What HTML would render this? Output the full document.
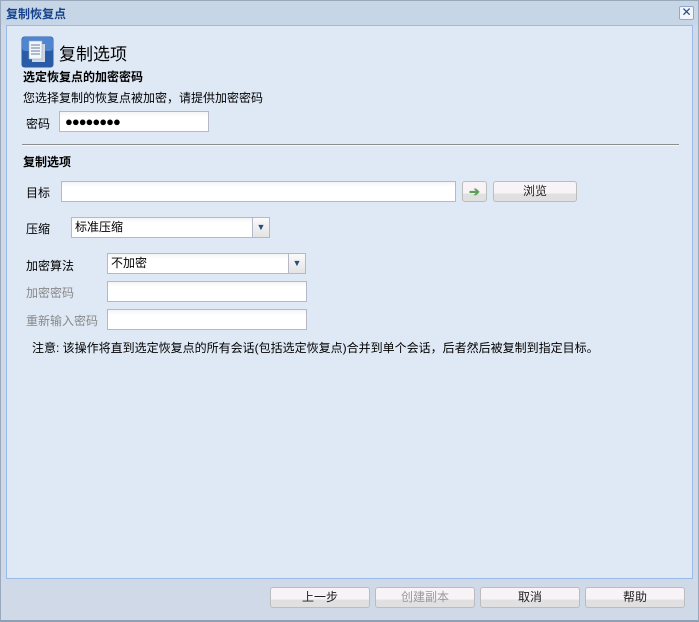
<!DOCTYPE html>
<html><head><meta charset="utf-8"><style>
*{margin:0;padding:0;box-sizing:border-box}
body{width:699px;height:622px;overflow:hidden;background:#cfd9e8;font-family:"Liberation Sans","Noto Sans CJK SC",sans-serif;font-size:12px;color:#000;position:relative}
.a{position:absolute}
#win{left:0;top:0;width:699px;height:622px;border:1px solid #99a8bb;border-bottom:2px solid #8fa0b5;background:#cfd9e8}
#title{left:1px;top:1px;width:697px;height:24px;background:#c6d6e6;color:#15428b;font-weight:bold;font-size:12px;padding:4px 0 0 5px}
#close{left:679px;top:6px;width:15px;height:14px;border:1px solid #8fa9cd;border-radius:2px;background:#f2f6fb;color:#25457a;font-size:12px;line-height:11px;text-align:center}
#panel{left:6px;top:25px;width:687px;height:554px;background:#dfe9f5;border:1px solid #99bbe8}
.in{background:linear-gradient(#f4f4f4,#fff 5px);border:1px solid #b5b8c8;height:21px}
.lbl{font-size:12px}
.grey{color:#888}
.btn{height:21px;border:1px solid #bcbcbc;border-radius:3px;background:linear-gradient(#f7f3f6 0,#f7f3f6 60%,#e0e0e0 60%);text-align:center;line-height:19px;font-size:12px;color:#222}
.dd{width:18px;height:21px;border:1px solid #b5b8c8;background:linear-gradient(#fafafa,#e4e4e4);color:#2b4a80;font-size:9px;text-align:center;line-height:19px}
</style></head><body>
<div id="win" class="a"></div>
<div id="title" class="a">复制恢复点</div>
<div id="close" class="a">✕</div>
<div id="panel" class="a"></div>
<svg class="a" style="left:21px;top:36px" width="33" height="32" viewBox="0 0 33 32"><rect x="0.5" y="0.5" width="32" height="31" rx="3" fill="#2a5ba6"/><rect x="1" y="1" width="31" height="14" rx="3" fill="#4f86cf"/><rect x="11" y="8" width="13" height="18" fill="#cfd7e2"/><rect x="8" y="5" width="13" height="18" fill="#f3f6fa" stroke="#9aa9bf" stroke-width=".6"/><g stroke="#6a7f9d" stroke-width="1"><line x1="10" y1="9" x2="19" y2="9"/><line x1="10" y1="12" x2="19" y2="12"/><line x1="10" y1="15" x2="19" y2="15"/><line x1="10" y1="18" x2="19" y2="18"/></g></svg>
<div class="a" style="left:59px;top:40px;font-size:17px">复制选项</div>
<div class="a" style="left:23px;top:68px;font-weight:bold">选定恢复点的加密密码</div>
<div class="a" style="left:23px;top:89px">您选择复制的恢复点被加密，请提供加密密码</div>
<div class="a" style="left:26px;top:115px">密码</div>
<div class="a in" style="left:59px;top:111px;width:150px;padding-left:5px;font-size:13px;line-height:19px;letter-spacing:-1px">●●●●●●●●</div>
<div class="a" style="left:22px;top:144px;width:657px;height:2px;border-top:1px solid #8e8e8e;border-bottom:1px solid #f5f8fb"></div>
<div class="a" style="left:23px;top:153px;font-weight:bold">复制选项</div>
<div class="a" style="left:26px;top:184px">目标</div>
<div class="a in" style="left:61px;top:181px;width:395px"></div>
<div class="a btn" style="left:462px;top:181px;width:25px;color:#5aa05a;font-weight:bold;font-size:13px">➔</div>
<div class="a btn" style="left:493px;top:181px;width:84px">浏览</div>
<div class="a" style="left:26px;top:220px">压缩</div>
<div class="a in" style="left:71px;top:217px;width:182px;padding-left:3px;line-height:19px">标准压缩</div>
<div class="a dd" style="left:252px;top:217px">▼</div>
<div class="a" style="left:26px;top:257px">加密算法</div>
<div class="a in" style="left:107px;top:253px;width:182px;padding-left:3px;line-height:19px">不加密</div>
<div class="a dd" style="left:288px;top:253px">▼</div>
<div class="a grey" style="left:26px;top:284px">加密密码</div>
<div class="a in" style="left:107px;top:281px;width:200px"></div>
<div class="a grey" style="left:26px;top:312px">重新输入密码</div>
<div class="a in" style="left:107px;top:309px;width:200px"></div>
<div class="a" style="left:32px;top:339px">注意: 该操作将直到选定恢复点的所有会话(包括选定恢复点)合并到单个会话，后者然后被复制到指定目标。</div>
<div class="a btn" style="left:270px;top:587px;width:100px">上一步</div>
<div class="a btn" style="left:375px;top:587px;width:100px;color:#999">创建副本</div>
<div class="a btn" style="left:480px;top:587px;width:100px">取消</div>
<div class="a btn" style="left:585px;top:587px;width:100px">帮助</div>
</body></html>
